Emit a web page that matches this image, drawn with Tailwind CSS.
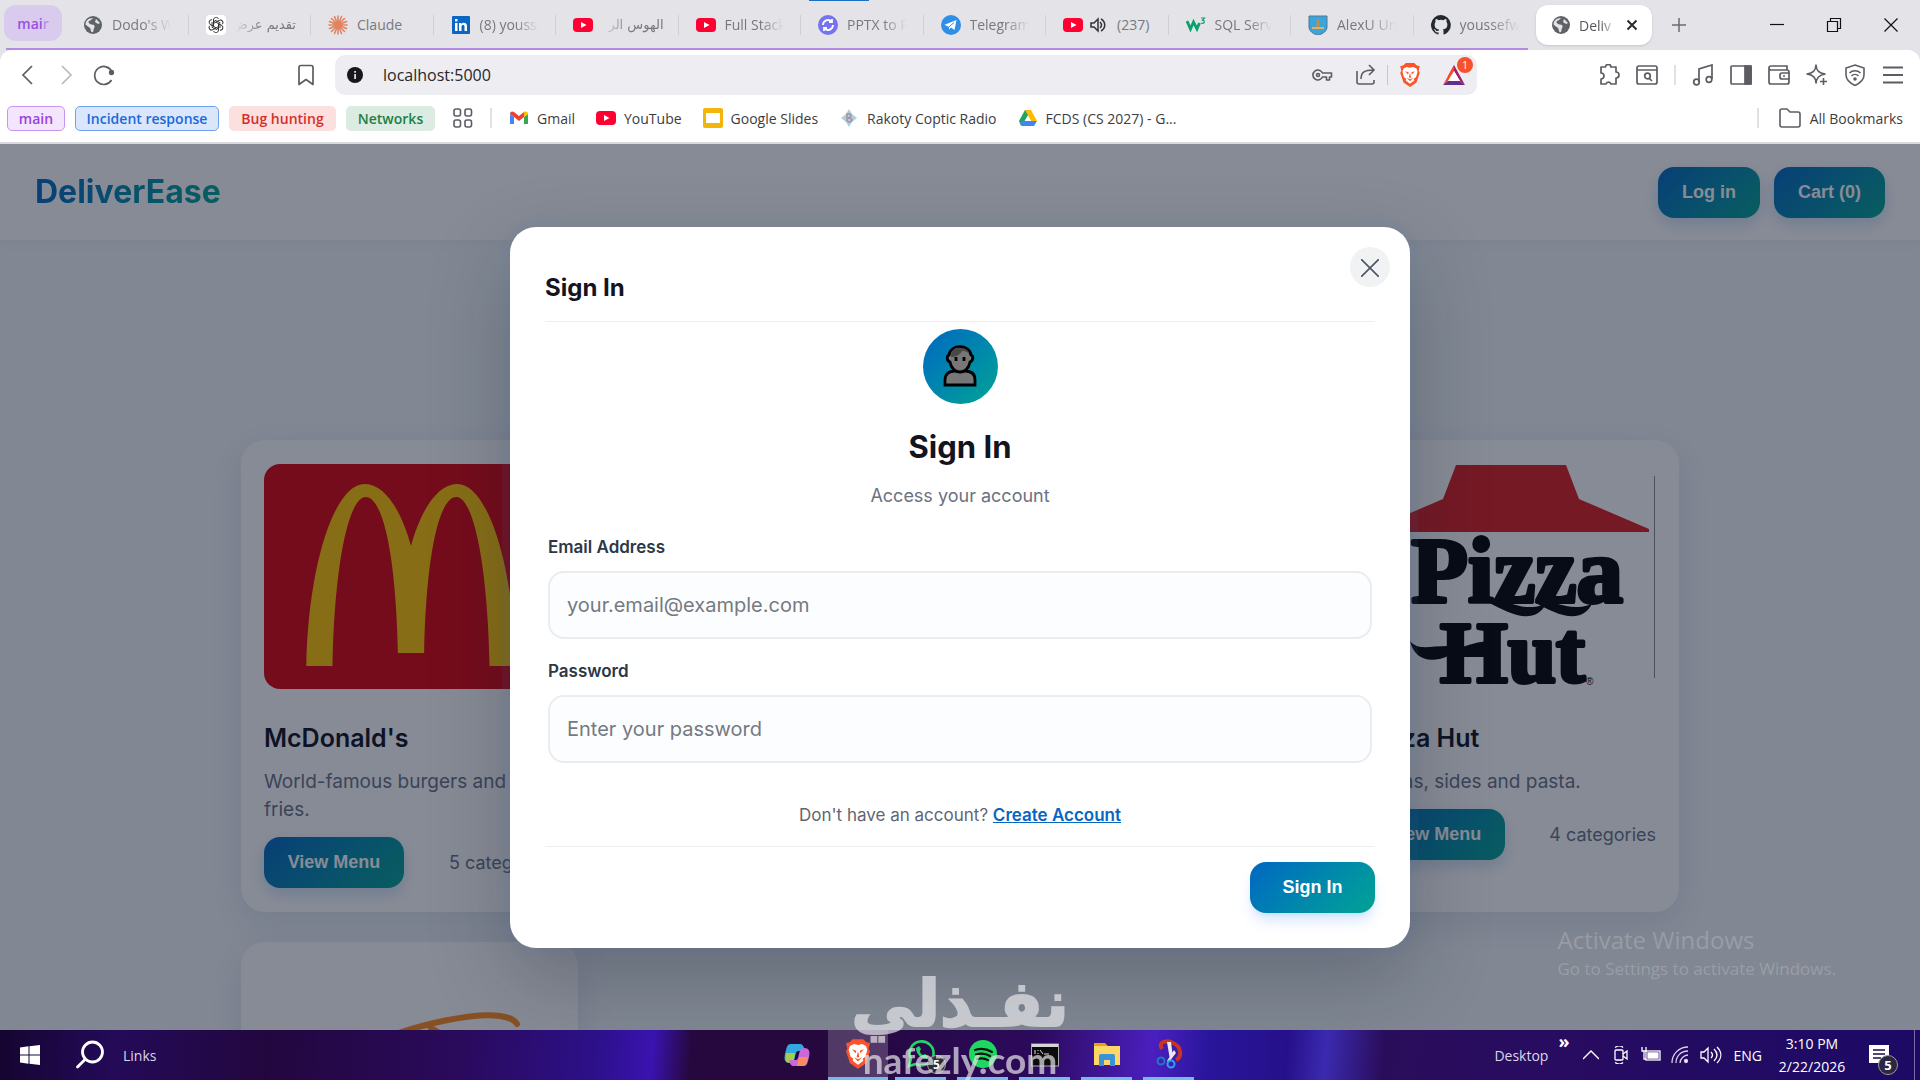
<!DOCTYPE html>
<html lang="en">
  <head>
    <meta charset="UTF-8" />
    <meta name="viewport" content="width=device-width, initial-scale=1.0" />
    <title>DeliverEase</title>
    <script src="https://cdn.jsdelivr.net/npm/@tailwindcss/browser@4"></script>
  </head>

  <body class="h-screen flex flex-col overflow-hidden bg-[#e3e3e8] text-[#3b3d42] font-['Open_Sans','Noto_Sans',sans-serif]">
    <!-- Shared icons -->
    <svg class="hidden">
      <symbol id="youtube" viewBox="0 0 20 20"><rect y="3" width="20" height="14" rx="4" fill="#ff0033" /><path d="M8 7v6l5.500-3z" fill="#fff" /></symbol>
      <symbol id="globe" viewBox="0 0 20 20"><circle cx="10" cy="10" r="9" fill="#5f6368" /><path d="M11 3c-2 0-2 2-4 2.500S5 8 7 9s4 0 4.500 2-1 2-1 4-1 2.500-2 2c-1-1-.5-3-1.500-4S4 11 2.500 9.500C2.500 5.500 6 2.500 11 3zM13 4l4 4-2 1-3-2z" fill="#e3e3e8" /></symbol>
      <symbol id="brave" viewBox="0 0 20 24"><path d="M6 1h8l2 2 3 1-1 4 1 2-3 9-6 4-6-4-3-9 1-2-1-4 3-1z" fill="#fb542b" /><path d="M4 6l3-1.500 3 .7 3-.7L16 6l1 3-1.500 5-2 1.500.5 1.500-4 3-4-3 .5-1.500-2-1.500L3 9z" fill="#fff" /><path d="M5.500 8.500l3.300 1-.6 2zM14.500 8.500l-3.300 1 .6 2zM10 10l1 4-1 .8-1-.8zM7 14.500l3 1.500 3-1.500-3 3.200z" fill="#fb542b" /></symbol>
    </svg>

    <!-- Tab strip -->
    <header class="shrink-0">
      <div class="relative h-[50px] flex items-start text-[14px] text-[#77797f]">
        <div class="w-[66px] h-[50px] pl-1 pt-[5px] shrink-0">
          <button class="w-[58px] h-9 rounded-xl bg-[#d9cbee] text-[#9a4fe0] font-semibold text-[14px]">mai<span class="opacity-50">r</span></button>
        </div>
        <nav class="w-[1470px] h-[50px] grid grid-cols-12 shrink-0">
          <a href="#" class="my-auto h-5 flex items-center gap-[9px] pl-[17px] pr-4 border-r border-[#cfcfd6] leading-5"><svg class="size-5 shrink-0"><use href="#globe" /></svg><span class="overflow-hidden whitespace-nowrap [mask-image:linear-gradient(to_right,#000_50%,transparent)]">Dodo's W</span></a>
          <a href="#" class="my-auto h-5 flex items-center gap-[9px] pl-[17px] pr-[14px] border-r border-[#cfcfd6] leading-5">
            <svg class="size-5 shrink-0" viewBox="0 0 20 20"><rect width="20" height="20" rx="4" fill="#fff" /><g fill="none" stroke="#333" stroke-width="1"><g id="petal"><path d="M7.500 8.500V5c0-3 4-3.500 5-1M7.500 8.500l4-2.200 3 1.700" /></g><use href="#petal" transform="rotate(60 10 10)" /><use href="#petal" transform="rotate(120 10 10)" /><use href="#petal" transform="rotate(180 10 10)" /><use href="#petal" transform="rotate(240 10 10)" /><use href="#petal" transform="rotate(300 10 10)" /></g></svg>
            <span dir="rtl" class="flex-1 overflow-hidden whitespace-nowrap [mask-image:linear-gradient(to_left,#000_55%,transparent)] font-['DejaVu_Sans',sans-serif] text-[13px]">تقديم عرض</span></a>
          <a href="#" class="my-auto h-5 flex items-center gap-[9px] pl-[17px] pr-4 border-r border-[#cfcfd6] leading-5">
            <svg class="size-5 shrink-0" viewBox="0 0 20 20" stroke="#e2825f" stroke-width="1.600" stroke-linecap="round"><path d="M10 1v18M1 10h18M3.500 3.500l13 13M3.500 16.500l13-13M6.500 1.500l7 17M1.500 13.500l17-7M1.500 6.500l17 7M6.500 18.500l7-17" /></svg>
            <span>Claude</span></a>
          <a href="#" class="my-auto h-5 flex items-center gap-[9px] pl-[17px] pr-4 border-r border-[#cfcfd6] leading-5">
            <svg class="size-5 shrink-0" viewBox="0 0 20 20"><rect x="1" y="1" width="18" height="18" rx="1" fill="#0a66c2" /><path d="M4 8h2.500v8H4zM4 4h2.500v2.500H4zM8 8h2.400v1.200C11.500 7 16 7.300 16 11v5h-2.500v-4.500c0-2-3-2-3 0V16H8z" fill="#fff" /></svg>
            <span class="overflow-hidden whitespace-nowrap [mask-image:linear-gradient(to_right,#000_60%,transparent)]">(8) yousse</span></a>
          <a href="#" class="my-auto h-5 flex items-center gap-[9px] pl-[17px] pr-[14px] border-r border-[#cfcfd6] leading-5"><svg class="size-5 shrink-0"><use href="#youtube" /></svg><span dir="rtl" class="flex-1 overflow-hidden whitespace-nowrap [mask-image:linear-gradient(to_left,#000_55%,transparent)] font-['DejaVu_Sans',sans-serif] text-[13px]">الهوس الر</span></a>
          <a href="#" class="my-auto h-5 flex items-center gap-[9px] pl-[17px] pr-4 border-r border-[#cfcfd6] leading-5"><svg class="size-5 shrink-0"><use href="#youtube" /></svg><span class="overflow-hidden whitespace-nowrap [mask-image:linear-gradient(to_right,#000_60%,transparent)]">Full Stack</span></a>
          <a href="#" class="my-auto h-5 flex items-center gap-[9px] pl-[17px] pr-4 border-r border-[#cfcfd6] leading-5">
            <svg class="size-5 shrink-0" viewBox="0 0 20 20"><circle cx="10" cy="10" r="10" fill="#7573ee" /><path d="M5 10a5 5 0 0 1 8.500-3.500M15 10a5 5 0 0 1-8.500 3.500M14 4v3h-3M6 16v-3h3" fill="none" stroke="#fff" stroke-width="1.800" /></svg>
            <span class="overflow-hidden whitespace-nowrap [mask-image:linear-gradient(to_right,#000_60%,transparent)]">PPTX to P</span></a>
          <a href="#" class="my-auto h-5 flex items-center gap-[9px] pl-[17px] pr-4 border-r border-[#cfcfd6] leading-5">
            <svg class="size-5 shrink-0" viewBox="0 0 20 20"><circle cx="10" cy="10" r="10" fill="#2f8fe8" /><path d="M3.500 9.800L15.500 5l-2 10-3.500-2.500L8 14.500V12z" fill="#fff" /><path d="M8 12l5-4.500" stroke="#2f8fe8" /></svg>
            <span class="overflow-hidden whitespace-nowrap [mask-image:linear-gradient(to_right,#000_60%,transparent)]">Telegram</span></a>
          <a href="#" class="my-auto h-5 flex items-center gap-[7px] pl-[17px] pr-4 border-r border-[#cfcfd6] leading-5"><svg class="size-5 shrink-0"><use href="#youtube" /></svg>
            <svg class="w-4 h-4 shrink-0" viewBox="0 0 16 16" fill="none" stroke="#333" stroke-width="1.500"><path d="M1 6v4h3l4 4V2L4 6zM10 5c2 2 2 4 0 6M11 2c5 3 5 9 0 12" /></svg>
            <span class="ml-1 whitespace-nowrap">(237)</span></a>
          <a href="#" class="my-auto h-5 flex items-center gap-[9px] pl-[17px] pr-4 border-r border-[#cfcfd6] leading-5">
            <svg class="size-5 shrink-0" viewBox="0 0 20 20" fill="none" stroke="#0aa06e"><path d="M1 6l3.500 8L7.500 7l3.500 7 2.500-6" stroke-width="2.800" /><path d="M15 3h3.500l-2 2.200c3 .3 2 4-1.500 2.800" stroke-width="1.200" /></svg>
            <span class="overflow-hidden whitespace-nowrap [mask-image:linear-gradient(to_right,#000_60%,transparent)]">SQL Serv</span></a>
          <a href="#" class="my-auto h-5 flex items-center gap-[9px] pl-[17px] pr-4 border-r border-[#cfcfd6] leading-5">
            <svg class="size-5 shrink-0" viewBox="0 0 20 20"><path d="M1 1h18v11c0 4-4 7-9 8-5-1-9-4-9-8z" fill="#3aa5dc" stroke="#50788e" /><path d="M8 12l1-8h2l1 8z" fill="#c58a4a" /><path d="M4 12h12v2H4z" fill="#d9b06d" /></svg>
            <span class="overflow-hidden whitespace-nowrap [mask-image:linear-gradient(to_right,#000_50%,transparent)]">AlexU Un</span></a>
          <a href="#" class="my-auto h-5 flex items-center gap-[9px] pl-[17px] pr-4 leading-5">
            <svg class="size-5 shrink-0" viewBox="0 0 16 16" fill="#24292f"><path d="M8 0a8 8 0 0 0-2.500 15.600c.4.100.5-.2.500-.4v-1.400c-2.200.5-2.700-1-2.700-1-.4-.9-.9-1.200-.9-1.200-.7-.5.100-.5.100-.5.800.1 1.200.8 1.200.8.700 1.200 1.900.9 2.300.7.100-.5.300-.9.500-1.100-1.800-.2-3.600-.9-3.600-4 0-.9.300-1.600.8-2.100-.1-.2-.4-1 .1-2.100 0 0 .7-.2 2.200.8a7.600 7.600 0 0 1 4 0c1.500-1 2.200-.8 2.200-.8.400 1.100.2 1.900.1 2.100.5.600.8 1.300.8 2.100 0 3.100-1.900 3.700-3.600 3.900.3.300.5.800.5 1.500v2.200c0 .2.100.5.600.4A8 8 0 0 0 8 0z" /></svg>
            <span class="overflow-hidden whitespace-nowrap [mask-image:linear-gradient(to_right,#000_50%,transparent)]">youssefw</span></a>
        </nav>
        <div class="mt-[5px] w-[116px] h-10 rounded-xl bg-white shadow-sm flex items-center gap-2 pl-[15px] pr-3 text-[#56585d] shrink-0">
          <svg class="size-5 shrink-0"><use href="#globe" /></svg>
          <span class="flex-1 overflow-hidden whitespace-nowrap [mask-image:linear-gradient(to_right,#000_60%,transparent)]">Deliv</span>
          <button aria-label="Close tab"><svg class="size-4" viewBox="0 0 16 16" stroke="#2a2b2e" stroke-width="2"><path d="M3.500 3.500l9 9M12.500 3.500l-9 9" /></svg></button>
        </div>
        <button aria-label="New tab" class="ml-[19px] mt-[17px]"><svg class="size-4" viewBox="0 0 16 16" stroke="#6a6c71" stroke-width="1.500"><path d="M8 1v14M1 8h14" /></svg></button>
        <div class="ml-auto mr-[21px] mt-[17px] flex gap-[41px]">
          <button aria-label="Minimize"><svg class="size-4" viewBox="0 0 16 16" stroke="#111" stroke-width="1.200"><path d="M1 7.500h14" /></svg></button>
          <button aria-label="Restore"><svg class="size-4" viewBox="0 0 16 16" stroke="#111" stroke-width="1.200" fill="none"><path d="M1.500 4.500h10v10h-10zM4.500 4V1.500h10v10H12" /></svg></button>
          <button aria-label="Close"><svg class="size-4" viewBox="0 0 16 16" stroke="#111" stroke-width="1.200"><path d="M1.500 1.500l13 13M14.500 1.500l-13 13" /></svg></button>
        </div>
        <div class="absolute left-[6px] bottom-0 w-[1522px] h-[2px] bg-[#b48ae2]"></div>
        <div class="absolute left-[809px] top-0 w-[60px] h-px bg-[#1b6fc4]"></div>
      </div>

      <!-- Address bar -->
      <div class="bg-white rounded-t-xl h-[50px] flex items-center text-[#5b5d63]">
        <div class="w-[335px] shrink-0 pl-[17px] pr-[18px] flex gap-4 items-center">
          <button aria-label="Back"><svg class="size-[22px]" viewBox="0 0 22 22" fill="none" stroke="currentColor" stroke-width="1.700"><path d="M15 2l-9 9 9 9" /></svg></button>
          <button aria-label="Forward"><svg class="size-[22px]" viewBox="0 0 22 22" fill="none" stroke="#b9bac0" stroke-width="1.700"><path d="M7 2l9 9-9 9" /></svg></button>
          <button aria-label="Reload"><svg class="size-[22px]" viewBox="0 0 22 22" fill="none" stroke="currentColor" stroke-width="1.700"><path d="M18.500 16a9 9 0 1 1 .5-8" /><circle cx="18.500" cy="8.500" r="1.800" fill="currentColor" /></svg></button>
          <button aria-label="Bookmark" class="ml-auto"><svg class="size-[22px]" viewBox="0 0 22 22" fill="none" stroke="currentColor" stroke-width="1.700"><path d="M4 20.500V3.500Q4 1.500 6 1.500h10q2 0 2 2v17l-7-5z" stroke-linejoin="round" /></svg></button>
        </div>
        <div class="flex-1 h-10 rounded-[10px] bg-[#ededf2] flex items-center pl-3 pr-[11px]">
          <svg class="size-4 shrink-0" viewBox="0 0 16 16"><circle cx="8" cy="8" r="8" fill="#17181b" /><path d="M7.200 7h1.800v5H7.200zM7.200 4h1.800v1.700H7.200z" fill="#ddd" /></svg>
          <input aria-label="Address" value="localhost:5000" class="flex-1 ml-5 bg-transparent outline-none text-[16px] text-[#26272b]" />
          <div class="flex items-center gap-[10px]">
            <svg class="w-[22px] h-5 mr-3" viewBox="0 0 22 20" fill="none" stroke="currentColor" stroke-width="1.600"><path d="M11.500 8h9v4h-2v3h-3v-3h-4A5 5 0 1 1 11.500 8z" stroke-linejoin="round" /><circle cx="7" cy="10" r="1.500" /></svg>
            <svg class="size-[22px]" viewBox="0 0 22 22" fill="none" stroke="currentColor" stroke-width="1.600"><path d="M2 7v11q0 2 2 2h13q2 0 2-2v-2M6 15c0-7 4-9 12-9M14 1l5 5-5 5" /></svg>
            <div class="w-px h-5 bg-[#c5c5cc]"></div>
            <svg class="w-[22px] h-[26px] ml-px mr-[11px]"><use href="#brave" /></svg>
            <div class="relative">
              <svg class="w-6 h-6" viewBox="0 0 24 24"><path d="M12 2L6 13l6-2z" fill="#ff4724" /><path d="M12 2L1 22l5-4 6-10z" fill="#ff4724" /><path d="M12 2l11 20-5-4-6-10z" fill="#9e1f63" /><path d="M1 22l5-4h12l5 4z" fill="#662d91" /><path d="M12 8l6 10H6z" fill="#fff" /></svg>
              <span class="absolute -top-[6px] left-[15px] size-4 rounded-full bg-[#f8522c] text-white text-[10px] leading-4 text-center">1</span>
            </div>
          </div>
        </div>
        <div class="w-[443px] shrink-0 pr-4 flex items-center justify-end gap-4">
          <svg class="size-[22px]" viewBox="0 0 22 22" fill="none" stroke="currentColor" stroke-width="1.700" stroke-linejoin="round"><path d="M3 3h4.500a2.700 2.700 0 0 1 5.400 0H18v5a2.700 2.700 0 0 1 0 6v6h-5a2.600 2.600 0 0 0-5 0H3v-5a3 3 0 0 0 0-6z" /></svg>
          <svg class="size-[22px]" viewBox="0 0 22 22" fill="none" stroke="currentColor" stroke-width="1.700"><rect x="1" y="2" width="20" height="18" rx="2" /><path d="M1 6h20M13 14l3 3" /><circle cx="11.500" cy="12" r="2.800" /></svg>
          <div class="w-[2px] h-5 bg-[#e0e0e5]"></div>
          <svg class="size-[22px]" viewBox="0 0 22 22" fill="none" stroke="currentColor" stroke-width="1.700"><path d="M7 18V5l13-4v14" /><circle cx="4.500" cy="18" r="2.800" /><circle cx="17" cy="15.500" r="2.800" /></svg>
          <svg class="size-[22px]" viewBox="0 0 22 22" fill="none" stroke="currentColor" stroke-width="1.700"><rect x="1" y="2" width="20" height="18" rx="1" /><path d="M15 2h6v18h-6z" fill="currentColor" /></svg>
          <svg class="size-[22px]" viewBox="0 0 22 22" fill="none" stroke="currentColor" stroke-width="1.700"><path d="M19 6V2H3Q1 2 1 4v14q0 2 2 2h16q2 0 2-2V8q0-2-2-2H3Q1 6 1 4M21 9h-7q-2 0-2 2v2q0 2 2 2h7" /><path d="M15 12h2" /></svg>
          <svg class="size-[22px]" viewBox="0 0 22 22" fill="none" stroke="currentColor" stroke-width="1.600" stroke-linejoin="round"><path d="M10 1c.5 6 3 8 9 9-3 .5-5 1.500-6.500 3-1.500 1.500-2 3-2.500 6-.5-6-3-8-9-9 6-1 8.500-3 9-9zM17.500 14v7M14 17.500h7" /></svg>
          <svg class="size-[22px]" viewBox="0 0 22 22" fill="none" stroke="currentColor" stroke-width="1.600"><path d="M11 1l9 3v7c0 5-4 8-9 10.500C6 19 2 16 2 11V4zM5.500 9c3-3 8-3 11 0M7.500 12c2-2 5-2 7 0" /><circle cx="11" cy="15" r="1" fill="currentColor" /></svg>
          <button aria-label="Menu"><svg class="size-[22px]" viewBox="0 0 22 22" stroke="currentColor" stroke-width="1.800"><path d="M1 3.500h20M1 11h20M1 18.500h20" /></svg></button>
        </div>
      </div>

      <!-- Bookmarks -->
      <div class="bg-white h-11 border-b-2 border-[#d8d8dd] pl-[7px] pr-[17px] pb-[6px] flex items-center text-[14px] whitespace-nowrap">
        <div class="flex gap-[10px] font-semibold leading-[23px] text-[14px]">
          <button class="w-[58px] h-[25px] rounded-[5px] border border-[#c795ef] bg-[#f2e5fc] text-[#9a3fe0]">main</button>
          <button class="w-[144px] h-[25px] rounded-[5px] border border-[#6ea2ee] bg-[#dae7fb] text-[#1a68dd]">Incident response</button>
          <button class="w-[107px] h-[25px] rounded-[5px] bg-[#fbe0df] text-[#d3302a]">Bug hunting</button>
          <button class="w-[89px] h-[25px] rounded-[5px] bg-[#dcece2] text-[#1b8044]">Networks</button>
        </div>
        <svg class="size-5 ml-[18px]" viewBox="0 0 20 20" fill="none" stroke="#5b5d63" stroke-width="1.600"><rect x="1" y="1" width="6.500" height="7" rx="2" /><rect x="12" y="1" width="6.500" height="7" rx="2" /><rect x="1" y="12" width="6.500" height="7" rx="2" /><rect x="12" y="12" width="6.500" height="7" rx="2" /></svg>
        <div class="w-[2px] h-5 mx-[17px] bg-[#e0e0e5]"></div>
        <div class="flex gap-[21px]">
          <a href="#" class="flex items-center gap-2"><svg class="w-5 h-5" viewBox="0 0 20 20"><path d="M1 16V6l4 3v7z" fill="#4285f4" /><path d="M15 16V9l4-3v10z" fill="#34a853" /><path d="M1 6c0-3 3-3 4-2l5 4 5-4v5l-5 4-5-4z" fill="#ea4335" /><path d="M15 4c2-1 4 0 4 2l-4 3z" fill="#fbbc04" /></svg>Gmail</a>
          <a href="#" class="flex items-center gap-2"><svg class="size-5"><use href="#youtube" /></svg>YouTube</a>
          <a href="#" class="flex items-center gap-2"><svg class="size-5" viewBox="0 0 20 20"><rect width="20" height="20" rx="2" fill="#f4b50b" /><rect x="3" y="5" width="14" height="10" fill="#fff" /></svg>Google Slides</a>
          <a href="#" class="flex items-center gap-2"><svg class="size-5" viewBox="0 0 20 20"><path d="M10 1l3 5 5 4-5 4-3 5-3-5-5-4 5-4z" fill="#abcfe6" /><path d="M8 14V6c5-1 5 3 1 4 5 0 5 4 0 4" fill="none" stroke="#b18d94" stroke-width="1.500" /></svg>Rakoty Coptic Radio</a>
          <a href="#" class="flex items-center gap-2"><svg class="size-5" viewBox="0 0 20 20"><path d="M7 2h6l-7 12-3 4-2-5z" fill="#1fa463" /><path d="M7 2h6l6 11h-6z" fill="#ffba00" /><path d="M4 13h15l-3 5H4l-2-3z" fill="#4285f4" /><path d="M10 8l3 5H7z" fill="#fff" /></svg>FCDS (CS 2027) - G...</a>
        </div>
        <div class="w-[2px] h-5 ml-auto mr-5 bg-[#e0e0e5]"></div>
        <a href="#" class="flex items-center gap-[9px]"><svg class="size-[22px]" viewBox="0 0 22 22" fill="none" stroke="#5b5d63" stroke-width="1.600"><path d="M1 18V4q0-2 2-2h5l3 3h8q2 0 2 2v11q0 2-2 2H3q-2 0-2-2z" /></svg>All Bookmarks</a>
      </div>
    </header>

    <!-- Page -->
    <main class="relative flex-1 min-h-0 overflow-hidden bg-[#f3f8fb] font-['Inter',sans-serif]">
      <div class="h-24 bg-white shadow-[0_2px_16px_rgba(15,60,120,0.06)] px-[35px] flex items-center justify-between">
        <span class="text-[32px] font-bold text-transparent bg-clip-text bg-linear-to-r from-[#0666c2] to-[#04a392]">DeliverEase</span>
        <div class="flex gap-[14px] font-['Liberation_Sans',sans-serif] font-bold text-[18px] text-white">
          <button class="h-[51px] px-6 rounded-2xl shadow-[0_6px_16px_rgba(6,102,194,0.2)] bg-linear-135 from-[#0666c2] to-[#04a392]">Log in</button>
          <button class="h-[51px] px-6 rounded-2xl shadow-[0_6px_16px_rgba(6,102,194,0.2)] bg-linear-135 from-[#0666c2] to-[#04a392]">Cart (0)</button>
        </div>
      </div>

      <div class="max-w-[1438px] mx-auto mt-[200px] grid grid-cols-4 gap-[30px]">
        <article class="bg-white rounded-3xl shadow-[0_10px_36px_rgba(40,40,110,0.12)] px-[23px] py-6 text-[#667085]">
          <svg class="w-full h-[225px] rounded-2xl" viewBox="0 0 289 225" preserveAspectRatio="none"><rect width="289" height="225" fill="#db000a" /><path d="M42 202C44 100 70 20 100 20c22 0 38 32 46 62 8-30 24-62 46-62 30 0 56 80 58 182h-26C222 100 208 33 191 33s-30 57-32 156h-26C131 90 118 33 101 33S70 100 68 202z" fill="#ffc400" /></svg>
          <h3 class="mt-[30px] text-[25px] leading-[38px] font-semibold text-[#0a0f1e]">McDonald's</h3>
          <p class="mt-[11px] text-[19px] leading-7">World-famous burgers and fries.</p>
          <div class="mt-[13px] flex items-center justify-between">
            <button class="h-[51px] w-[140px] rounded-2xl shadow-[0_6px_16px_rgba(6,102,194,0.2)] bg-linear-135 from-[#0666c2] to-[#04a392] font-['Liberation_Sans',sans-serif] font-bold text-[18px] text-white">View Menu</button>
            <span class="text-[18px]">5 categories</span>
          </div>
        </article>
        <article class="bg-white rounded-3xl"></article>
        <article class="bg-white rounded-3xl"></article>
        <article class="bg-white rounded-3xl shadow-[0_10px_36px_rgba(40,40,110,0.12)] px-[23px] py-6 text-[#667085]">
          <svg class="w-full h-[225px]" viewBox="0 0 289 225">
            <path d="M90 1h110l13 34 70 30v3H7v-3l70-30z" fill="#db1b1e" />
            <g font-family="Liberation Serif, serif" font-weight="700" fill="#000" stroke="#000" stroke-width="4" stroke-linejoin="round">
              <text x="257" y="138" font-size="93" text-anchor="end">Pizza</text>
              <text x="74" y="218" font-size="87">Hut</text>
            </g>
            <path d="M122 138c20-6 30 12 58 2-12 22-36 10-58-2zM168 138c20-6 30 12 58 2-12 22-36 10-58-2zM44 177c10 12 24 2 52 6 18-6 30-8 38-4v10c-20-4-26 2-50 2-20 10-36 4-40-14z" fill="#000" />
            <text x="220" y="221" font-size="10" font-family="Liberation Sans, sans-serif" fill="#000">®</text>
            <path d="M288.500 12v202" stroke="#888" />
          </svg>
          <h3 class="mt-[30px] text-[25px] leading-[38px] font-semibold text-[#0a0f1e]">Pizza Hut</h3>
          <p class="mt-[11px] text-[19px] leading-7">Pizzas, sides and pasta.</p>
          <div class="mt-[13px] flex items-center justify-between">
            <button class="h-[51px] w-[140px] rounded-2xl shadow-[0_6px_16px_rgba(6,102,194,0.2)] bg-linear-135 from-[#0666c2] to-[#04a392] font-['Liberation_Sans',sans-serif] font-bold text-[18px] text-white">View Menu</button>
            <span class="text-[18px]">4 categories</span>
          </div>
        </article>
        <article class="h-[472px] bg-white rounded-3xl shadow-[0_10px_36px_rgba(40,40,110,0.12)] px-[23px] py-6">
          <svg class="w-full h-[225px]" viewBox="0 0 289 225" fill="none" stroke="#ff8a1c" stroke-width="6" stroke-linecap="round"><path d="M120 72c36-14 90-26 115-22q14 2 17 8M166 62l10 6" /></svg>
        </article>
      </div>

      <!-- Sign in modal -->
      <div class="absolute inset-0 bg-slate-900/50 flex items-center justify-center">
        <div role="dialog" aria-label="Sign In" class="relative w-[900px] bg-white rounded-[26px] px-[35px] pt-9 pb-[35px] shadow-[0_0_0_8px_rgba(90,130,190,0.07),0_30px_80px_rgba(15,23,42,0.25)]">
          <button aria-label="Close" class="absolute top-5 right-5 size-10 rounded-full bg-[#f1f2f3] flex items-center justify-center">
            <svg class="size-[18px] mt-[2px]" viewBox="0 0 18 18" stroke="#4b5563" stroke-width="1.600"><path d="M0 0l18 18M18 0L0 18" /></svg>
          </button>
          <h2 class="pb-2 border-b border-[#eef0f2] text-[24px] leading-[50px] font-bold text-[#14141f]">Sign In</h2>
          <form class="flex flex-col" onsubmit="return false">
            <div class="mt-[7px] mx-auto size-[75px] rounded-full bg-linear-135 from-[#0666c2] to-[#04a392] flex items-center justify-center">
              <svg class="w-[34px] h-[42px]" viewBox="0 0 34 42" stroke="#000" stroke-width="2.800"><path d="M2 40V35c0-7 5-9 10-9h10c5 0 10 2 10 9v5z" fill="#777" /><path d="M6 10C7-1 27-1 28 10c3 1 2 6-1 7-1 6-5 10-10 10S8 23 7 17c-3-1-4-6-1-7z" fill="#777" /><path d="M8 12C8 2 15 2.500 18 3c5 0 8 3 8 6-2-3-5-3-7-3-2 4-7 6-11 6z" fill="#484848" stroke="none" /><path d="M13 12v4M21 12v4" /></svg>
            </div>
            <h3 class="mt-[22px] text-center text-[31px] leading-[42px] font-bold text-[#14141f]">Sign In</h3>
            <p class="mt-[14px] text-center text-[18px] leading-7 text-[#6b7280]">Access your account</p>
            <div class="px-[3px] flex flex-col">
              <label for="email" class="mt-[25px] text-[17px] leading-6 font-semibold text-[#2d3748]">Email Address</label>
              <input id="email" type="email" placeholder="your.email@example.com" class="mt-3 h-[68px] px-[17px] rounded-2xl border-2 border-[#eaedf0] bg-[#fcfdff] text-[20px] placeholder-[#757a80]" />
              <label for="password" class="mt-5 text-[17px] leading-6 font-semibold text-[#2d3748]">Password</label>
              <input id="password" type="password" placeholder="Enter your password" class="mt-3 h-[68px] px-[17px] rounded-2xl border-2 border-[#eaedf0] bg-[#fcfdff] text-[20px] placeholder-[#757a80]" />
            </div>
            <p class="mt-[38px] text-center text-[17px] leading-7 text-[#5f6672]">Don't have an account? <a href="#" class="font-semibold underline text-[#0666c2]">Create Account</a></p>
            <div class="mt-[17px] pt-[15px] border-t border-[#eef0f2] flex justify-end">
              <button class="w-[125px] h-[51px] rounded-2xl shadow-lg shadow-blue-500/20 bg-linear-135 from-[#0666c2] to-[#04a392] font-['Liberation_Sans',sans-serif] font-bold text-[18px] text-white">Sign In</button>
            </div>
          </form>
        </div>
      </div>

      <div class="absolute right-[84px] bottom-12 font-['Open_Sans',sans-serif] text-white/20">
        <p class="text-[24px] leading-8">Activate Windows</p>
        <p class="text-[17px] leading-[26px]">Go to Settings to activate Windows.</p>
      </div>
    </main>

    <!-- Taskbar -->
    <footer class="relative h-[50px] shrink-0 flex items-center text-[14px] text-white bg-[linear-gradient(95deg,#150530_0%,#240a58_6%,#22073f_14%,#2a0a5c_24%,#2c1088_31%,#3a13b0_34%,#26083f_36%,#26083f_44%,#2c0a5c_54%,#4a1fc0_60%,#28159a_63%,#26108a_67%,#3b2ab0_69%,#2a0d5a_72%,#280c60_80%,#1c0a66_100%)]">
      <div class="flex-1 flex items-center pl-5">
        <button aria-label="Start"><svg class="w-5 h-5" viewBox="0 0 20 20" fill="#fff"><path d="M0 2.500l8.500-1.200v8.200H0zM9.500 1.200L20 0v9.500H9.500zM0 10.500h8.500v8.200L0 17.500zM9.500 10.500H20V20L9.500 18.800z" /></svg></button>
        <button aria-label="Search" class="ml-[35px]"><svg class="w-[30px] h-[30px]" viewBox="0 0 30 30" fill="none" stroke="#fff" stroke-width="2.800" stroke-linecap="round"><circle cx="17.500" cy="12" r="10" /><path d="M10 19.500L2.500 27" /></svg></button>
        <span class="ml-[18px] text-[#dcd6ea]">Links</span>
      </div>
      <div class="ml-[25px] flex h-full">
        <button aria-label="Copilot" class="w-[62px] flex items-center justify-center"><svg class="size-7" viewBox="0 0 28 28"><path d="M8 3h9c3 0 4 3 5 7h-6c-3 0-3 2-4 6s-2 6-5 6C0 22 1 16 3 9c1-4 2-6 5-6z" fill="#31a8e0" /><path d="M3 12h9l-1 6c-1 3-2 4-4 4-5 0-5-4-4-10z" fill="#a7cf45" /><path d="M20 25h-9c-3 0-4-2-5-6h6c3 0 3-2 4-6s2-6 5-6c7 0 6 6 4 13-1 4-2 5-5 5z" fill="#c968d8" /><path d="M25 16h-9l-2 9h6c3 0 4-3 5-9z" fill="#fb8a62" /></svg></button>
        <button aria-label="Brave" class="w-[60px] bg-white/20 border-b-[3px] border-[#76b9ed] flex items-center justify-center"><svg class="w-7 h-8"><use href="#brave" /></svg></button>
        <button aria-label="WhatsApp" class="relative w-[51px] ml-[7px] border-b-[3px] border-[#76b9ed] flex items-center justify-center"><svg class="size-[30px]" viewBox="0 0 30 30" fill="none" stroke="#25d366" stroke-width="2.600"><path d="M3 27l2-7a12 12 0 1 1 5 5z" /><path d="M10 9c0 6 5 11 11 11l1-3-3-2-2 1c-2-1-3-2-3-4l1-2-2-3z" fill="#25d366" stroke="none" /></svg><span class="absolute right-0 bottom-[3px] size-[19px] rounded-full bg-[#333]/80 border border-[#999] text-[12px] leading-[17px] font-bold">5</span></button>
        <button aria-label="Spotify" class="w-[51px] ml-[11px] border-b-[3px] border-[#76b9ed] flex items-center justify-center"><svg class="size-7" viewBox="0 0 28 28"><circle cx="14" cy="14" r="14" fill="#1ed760" /><path d="M6 10c6-2 12-1 17 2M7 14.500c5-1.500 10-1 14 1.500M8 19c4-1.200 8-.8 11 1.200" fill="none" stroke="#111" stroke-width="2.200" stroke-linecap="round" /></svg></button>
        <button aria-label="Command Prompt" class="w-[51px] ml-[11px] border-b-[3px] border-[#76b9ed] flex items-center justify-center"><svg class="size-7" viewBox="0 0 28 28"><rect x=".5" y="4" width="27" height="22" fill="#0b0b0b" stroke="#aaa" /><path d="M1 4h26v3H1z" fill="#d6d6d6" /><path d="M4 10v4M7 10v1M7 13v1M9 10l3 4M13 14h5" stroke="#ddd" /></svg></button>
        <button aria-label="File Explorer" class="w-[51px] ml-[11px] border-b-[3px] border-[#76b9ed] flex items-center justify-center"><svg class="size-7" viewBox="0 0 28 28"><path d="M1 3h11l3 3h-3L1 8z" fill="#e5a50e" /><path d="M1 6h26v19H1z" fill="#ffd767" /><path d="M6 26V16q0-2 2-2h12q2 0 2 2v10h-5v-6h-6v6z" fill="#3b93d6" /></svg></button>
        <button aria-label="Snipping Tool" class="w-[51px] ml-[11px] border-b-[3px] border-[#76b9ed] flex items-center justify-center"><svg class="size-[30px]" viewBox="0 0 30 30" fill="none"><path d="M8 10C3 2 14 1 19 4c9 4 9 14 3 17" stroke="#c8371d" stroke-width="4" /><path d="M13 3l4 0 2 15-3 3zM13 22l7-11 2 3-7 9z" fill="#e8eaf0" /><circle cx="7" cy="22" r="3.500" stroke="#1f78c0" stroke-width="2" /><circle cx="17" cy="25" r="3.500" stroke="#2fa0f0" stroke-width="2" /></svg></button>
      </div>
      <div class="flex-1 flex items-center justify-end pr-[5px] h-full">
        <span class="text-[#dcd6ea]">Desktop</span>
        <span class="ml-[10px] mb-7 text-[18px] leading-4 font-bold">»</span>
        <svg class="w-4 h-4 ml-[13px]" viewBox="0 0 16 16" fill="none" stroke="#fff" stroke-width="1.400"><path d="M0 12l8-8 8 8" /></svg>
        <svg class="w-[18px] h-[18px] ml-[13px]" viewBox="0 0 18 18" fill="none" stroke="#fff" stroke-width="1.300"><rect x="3" y="4" width="8" height="10" rx="1" /><path d="M11 8l4-3v8l-4-3M3 1.500c3-2 6-2 8 0M3 16.500c3 2 6 2 8 0" /></svg>
        <svg class="w-5 h-[18px] ml-[11px]" viewBox="0 0 20 18" fill="none" stroke="#fff" stroke-width="1.300"><rect x="5" y="5" width="14" height="9" /><path d="M7 7h10v5H7z" fill="#fff" /><path d="M1 1v4h4V1M3 5v8h2" /></svg>
        <svg class="w-[18px] h-[18px] ml-[10px]" viewBox="0 0 18 18" fill="none" stroke="#d8d2ea" stroke-width="1.300"><path d="M1 17C1 8 8 1 17 1M5 17C5 10 10 5 17 5M9 17c0-4 4-8 8-8" /><circle cx="15" cy="15" r="1.500" fill="#fff" /></svg>
        <svg class="w-[22px] h-5 ml-[11px]" viewBox="0 0 22 20" fill="none" stroke="#fff" stroke-width="1.300"><path d="M1 7v6h3l4 4V3L4 7zM11 7c2 2 2 4 0 6M14 4c4 4 4 8 0 12M17 2c5 5 5 11 0 16" /></svg>
        <span class="ml-3">ENG</span>
        <div class="ml-[14px] w-[72px] text-center leading-[23px]">3:10 PM<br />2/22/2026</div>
        <button aria-label="Notifications" class="relative ml-[21px] w-8 h-7">
          <svg class="w-5 h-6 mt-1" viewBox="0 0 20 24"><path d="M0 0h20v18h-6l-4 4v-4H0z" fill="#fff" /><path d="M4 5h12M4 9h12M4 13h8" stroke="#1c0a4a" stroke-width="1.300" /></svg>
          <span class="absolute left-[9px] top-[14px] size-5 rounded-full border border-[#999] bg-[#2b2740] text-[13px] leading-[18px] font-bold">5</span>
        </button>
        <div class="ml-[13px] w-px h-full bg-white/40"></div>
      </div>

      <!-- Watermark -->
      <div class="pointer-events-none absolute inset-x-0 bottom-0 flex flex-col items-center text-[#e6e6ea] opacity-70">
        <span dir="rtl" class="font-['DejaVu_Sans',sans-serif] font-bold text-[64px] leading-[72px] [-webkit-text-stroke:2px_#e6e6ea]">نفـذلي</span>
        <span class="font-['Lato',sans-serif] font-bold text-[37px] leading-10">nafezly.com</span>
      </div>
    </footer>
  </body>
</html>
